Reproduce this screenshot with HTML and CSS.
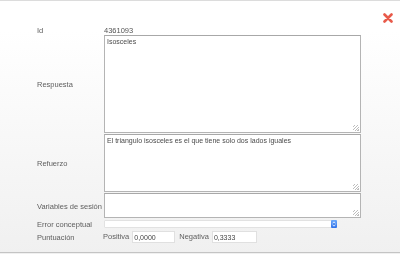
FILE: index.html
```html
<!DOCTYPE html>
<html lang="es">
<head>
<meta charset="utf-8">
<title>Respuesta</title>
<link rel="stylesheet" href="styles.css">
</head>
<body>
<div class="dialog">
  <a class="close" href="#" aria-label="Cerrar">
    <svg width="10" height="10" viewBox="0 0 10 10"><path d="M1.5 1.5 L8.5 8.5 M8.5 1.5 L1.5 8.5" stroke="#e85a4a" stroke-width="2.6" stroke-linecap="round"/></svg>
  </a>
  <form class="form">
    <div class="row row-id">
      <span class="lbl">Id</span>
      <span class="val">4361093</span>
    </div>
    <div class="row row-resp">
      <label class="lbl">Respuesta</label>
      <textarea class="ta ta-resp">Isosceles</textarea>
    </div>
    <div class="row row-ref">
      <label class="lbl">Refuerzo</label>
      <textarea class="ta ta-ref">El triangulo isosceles es el que tiene solo dos lados iguales</textarea>
    </div>
    <div class="row row-var">
      <label class="lbl">Variables de sesión</label>
      <textarea class="ta ta-var"></textarea>
    </div>
    <div class="row row-err">
      <label class="lbl">Error conceptual</label>
      <div class="selwrap">
        <select class="sel"><option></option></select>
        <span class="selbtn">
          <svg width="6" height="8" viewBox="0 0 6 8"><path d="M1.6 3.3 L3 1.8 L4.4 3.3 M1.6 4.7 L3 6.2 L4.4 4.7" stroke="#fff" stroke-width="0.8" fill="none"/></svg>
        </span>
      </div>
    </div>
    <div class="row row-pts">
      <span class="lbl">Puntuación</span>
      <div class="pts">
        <label class="sub">Positiva</label>
        <input class="num num-pos" type="text" value="0,0000">
        <label class="sub sub-neg">Negativa</label>
        <input class="num num-neg" type="text" value="0,3333">
      </div>
    </div>
  </form>
</div>
</body>
</html>
```

FILE: styles.css
```css
html, body {
  margin: 0;
  padding: 0;
  background: #f0f0f0;
}
body {
  width: 400px;
  height: 254px;
  overflow: hidden;
  font-family: "Liberation Sans", Arial, sans-serif;
}
.dialog {
  position: relative;
  box-sizing: border-box;
  height: 253px;
  border-top: 1px solid #dcdcdc;
  border-bottom: 1px solid #c4c4c4;
  background: linear-gradient(to bottom, #ffffff 0px, #ffffff 30px, #f0f0f0 253px);
}
.close {
  position: absolute;
  left: 383px;
  top: 12px;
  width: 10px;
  height: 10px;
  display: block;
  line-height: 0;
}
.form {
  margin: 0;
  padding: 24px 0 0 37px;
  display: flex;
  flex-direction: column;
  will-change: transform;
}
.row {
  display: flex;
  align-items: center;
}
.lbl {
  width: 67px;
  flex: none;
  font-size: 7.5px;
  line-height: 10px;
  padding-top: 2px;
  color: #5e5e5e;
  white-space: nowrap;
}
.val {
  font-size: 7.5px;
  line-height: 10px;
  padding-top: 2px;
  color: #555;
}
.row-id { height: 10px; }
.ta {
  box-sizing: border-box;
  width: 257px;
  margin: 0;
  padding: 2px 2px 1px;
  border: 1px solid #b4b4b4;
  border-top-color: #a8a8a8;
  font-family: "Liberation Sans", Arial, sans-serif;
  font-size: 7px;
  line-height: 8px;
  color: #4a4a4a;
  resize: none;
  background-color: #fff;
  background-image: repeating-linear-gradient(135deg, #fff 0px, #fff 1px, #bdbdbd 1px, #bdbdbd 2px);
  background-repeat: no-repeat;
  background-position: right 1px bottom 1px;
  background-size: 6px 6px;
  outline: none;
}
.ta-resp { height: 98px; }
.row-ref { margin-top: 1px; }
.ta-ref { height: 58px; }
.row-var { margin-top: 1px; }
.ta-var { height: 25px; }
.row-err { margin-top: 2px; height: 8px; }
.selwrap {
  position: relative;
  width: 233px;
  height: 8px;
}
.sel {
  -webkit-appearance: none;
  appearance: none;
  box-sizing: border-box;
  display: block;
  width: 233px;
  height: 8px;
  margin: 0;
  padding: 0;
  border: 1px solid #e2e2e2;
  border-radius: 1px;
  background: #fff;
  font-size: 6px;
  outline: none;
}
.selbtn {
  position: absolute;
  right: 0;
  top: 0;
  width: 6px;
  height: 8px;
  border-radius: 1px;
  background: linear-gradient(to bottom, #6aa8fa, #2f72ea);
  line-height: 0;
}
.row-pts { margin-top: 3px; height: 12px; }
.pts {
  display: flex;
  align-items: center;
  margin-left: -1px;
}
.sub {
  font-size: 7.5px;
  line-height: 10px;
  color: #5e5e5e;
  margin-right: 3px;
}
.sub-neg { margin-left: 4px; }
.num {
  box-sizing: border-box;
  height: 12px;
  margin: 0;
  padding: 0 1px;
  border: 1px solid #e0e0e0;
  background: #fff;
  font-family: "Liberation Sans", Arial, sans-serif;
  font-size: 7px;
  color: #444;
  outline: none;
}
.num-pos { width: 43px; }
.num-neg { width: 45px; }
```
